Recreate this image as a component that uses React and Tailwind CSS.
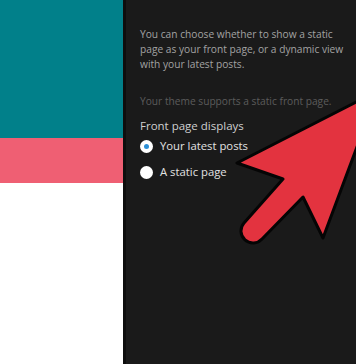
import React from "react";

function Arrow() {
  return (
    <svg
      className="absolute inset-0 pointer-events-none"
      width="356"
      height="364"
      viewBox="0 0 356 364"
    >
      <path
        d="M 237 163 L 364 98 L 364 128 L 323 238 L 303 197 L 262 239 A 11 11 0 0 1 244 223 L 283 179 Z"
        fill="#e3333f"
        stroke="#050505"
        strokeWidth="3"
        strokeLinejoin="round"
      />
    </svg>
  );
}

function Radio({ checked, label }) {
  return (
    <label className="flex items-center gap-[7px]">
      <span className="w-[13px] h-[13px] rounded-full bg-white flex items-center justify-center">
        {checked && <span className="w-[5px] h-[5px] rounded-full bg-[#2b8fd6]" />}
      </span>
      <span className="text-[11.3px] text-[#e2e2e2]">{label}</span>
    </label>
  );
}

export default function App() {
  return (
    <div
      className="relative w-[356px] h-[364px] flex overflow-hidden bg-[#1a1a1a]"
      style={{ fontFamily: '"Open Sans", "Noto Sans", sans-serif' }}
    >
      {/* preview side */}
      <div className="w-[123px] flex flex-col">
        <div className="h-[138px] bg-[#01808a]" />
        <div className="h-[45px] bg-[#ef5f73]" />
        <div className="flex-1 bg-white" />
      </div>
      <div className="w-[3px] bg-[#0e0e0e]" />

      {/* customizer panel */}
      <div className="flex-1 pl-[14px] pr-0 pt-[27px]">
        <p className="text-[10.2px] leading-[15px] text-[#a3a3a3]">
          You can choose whether to show a static page as your front page, or a
          dynamic view with your latest posts.
        </p>
        <p className="mt-[22px] text-[10.2px] leading-[15px] text-[#5c5c5c]">
          Your theme supports a static front page.
        </p>
        <p className="mt-[9px] text-[11.5px] leading-[16px] text-[#cfcfcf]">
          Front page displays
        </p>
        <div className="mt-[4px] flex flex-col gap-[9px]">
          <Radio checked label="Your latest posts" />
          <Radio label="A static page" />
        </div>
      </div>

      <Arrow />
    </div>
  );
}
